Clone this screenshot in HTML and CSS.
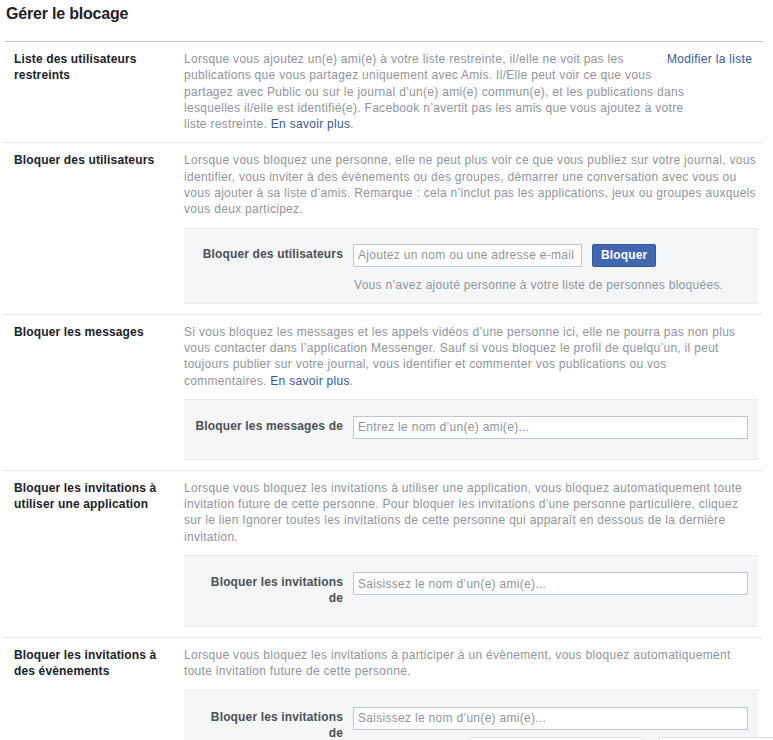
FILE: index.html
```html
<!DOCTYPE html>
<html lang="fr">
<head>
<meta charset="utf-8">
<title>Gérer le blocage</title>
<link rel="stylesheet" href="styles.css">
</head>
<body>
<div class="page">
  <h2 class="page-title">Gérer le blocage</h2>

  <div class="row row--edit">
    <div class="row-label">Liste des utilisateurs restreints</div>
    <div class="row-body">
      <p class="desc">Lorsque vous ajoutez un(e) ami(e) à votre liste restreinte, il/elle ne voit pas les publications que vous partagez uniquement avec Amis. Il/Elle peut voir ce que vous partagez avec Public ou sur le journal d’un(e) ami(e) commun(e), et les publications dans lesquelles il/elle est identifié(e). Facebook n’avertit pas les amis que vous ajoutez à votre liste restreinte. <a class="link" href="#">En savoir plus</a>.</p>
    </div>
    <div class="row-edit"><a class="link" href="#">Modifier la liste</a></div>
  </div>

  <div class="row">
    <div class="row-label">Bloquer des utilisateurs</div>
    <div class="row-body">
      <p class="desc">Lorsque vous bloquez une personne, elle ne peut plus voir ce que vous publiez sur votre journal, vous identifier, vous inviter à des évènements ou des groupes, démarrer une conversation avec vous ou vous ajouter à sa liste d’amis. Remarque : cela n’inclut pas les applications, jeux ou groupes auxquels vous deux participez.</p>
      <div class="block-form block-form--hint">
        <div class="form-row">
          <label class="form-label">Bloquer des utilisateurs</label>
          <div class="form-field">
            <div class="field-inline">
              <input class="text-input text-input--short" type="text" placeholder="Ajoutez un nom ou une adresse e-mail">
              <button class="btn-primary" type="button">Bloquer</button>
            </div>
            <p class="hint">Vous n’avez ajouté personne à votre liste de personnes bloquées.</p>
          </div>
        </div>
      </div>
    </div>
  </div>

  <div class="row">
    <div class="row-label">Bloquer les messages</div>
    <div class="row-body">
      <p class="desc">Si vous bloquez les messages et les appels vidéos d’une personne ici, elle ne pourra pas non plus vous contacter dans l’application Messenger. Sauf si vous bloquez le profil de quelqu’un, il peut toujours publier sur votre journal, vous identifier et commenter vos publications ou vos<br>commentaires. <a class="link" href="#">En savoir plus</a>.</p>
      <div class="block-form">
        <div class="form-row">
          <label class="form-label">Bloquer les messages de</label>
          <div class="form-field">
            <input class="text-input" type="text" placeholder="Entrez le nom d’un(e) ami(e)...">
          </div>
        </div>
      </div>
    </div>
  </div>

  <div class="row">
    <div class="row-label">Bloquer les invitations à utiliser une application</div>
    <div class="row-body">
      <p class="desc">Lorsque vous bloquez les invitations à utiliser une application, vous bloquez automatiquement toute invitation future de cette personne. Pour bloquer les invitations d’une personne particulière, cliquez sur le lien Ignorer toutes les invitations de cette personne qui apparaît en dessous de la dernière invitation.</p>
      <div class="block-form">
        <div class="form-row">
          <label class="form-label">Bloquer les invitations de</label>
          <div class="form-field">
            <input class="text-input" type="text" placeholder="Saisissez le nom d’un(e) ami(e)...">
          </div>
        </div>
      </div>
    </div>
  </div>

  <div class="row">
    <div class="row-label">Bloquer les invitations à des évènements</div>
    <div class="row-body">
      <p class="desc">Lorsque vous bloquez les invitations à participer à un évènement, vous bloquez automatiquement toute invitation future de cette personne.</p>
      <div class="block-form">
        <div class="form-row">
          <label class="form-label">Bloquer les invitations de</label>
          <div class="form-field">
            <input class="text-input" type="text" placeholder="Saisissez le nom d’un(e) ami(e)...">
          </div>
        </div>
      </div>
    </div>
  </div>
</div>

<div class="chat-tab chat-tab--one"></div>
<div class="chat-tab chat-tab--two"></div>
</body>
</html>
```

FILE: styles.css
```css
html, body {
  margin: 0;
  padding: 0;
  background: #ffffff;
}

body {
  font-family: "Liberation Sans", Arial, Helvetica, sans-serif;
  font-size: 12px;
  line-height: 16px;
  letter-spacing: 0.3px;
  color: #1d2129;
}

.page {
  margin-left: 4px;
  width: 759px;
}

.page-title {
  margin: 0;
  padding: 4px 0 17px 2px;
  font-size: 16px;
  line-height: 20px;
  font-weight: bold;
  letter-spacing: -0.2px;
  color: #1d2129;
  border-bottom: 1px solid #c6c7ca;
}

.row {
  display: grid;
  grid-template-columns: 170px 1fr;
  padding: 9px 5px 10px 10px;
  border-bottom: 1px solid #e9ebee;
}

.row--edit {
  grid-template-columns: 170px 510px 1fr;
}

.row-label {
  font-weight: bold;
  letter-spacing: 0.15px;
  color: #1d2129;
  padding-right: 16px;
}

.row-body {
  min-width: 0;
}

.row-edit {
  white-space: nowrap;
}

.row-edit .link {
  display: inline-block;
  margin-left: -27px;
}

.desc {
  margin: 0;
  line-height: 16.3px;
  color: #90949c;
}

.link {
  color: #365899;
  text-decoration: none;
}

.block-form {
  margin-top: 10px;
  background: #f5f6f7;
  border-top: 1px solid #e9ebee;
  border-bottom: 1px solid #e9ebee;
  padding: 16px 10px 20px 0;
}

.block-form--hint {
  padding-top: 15px;
  padding-bottom: 10px;
}

.form-row {
  display: grid;
  grid-template-columns: 148.7px 1fr;
  column-gap: 10px;
  padding-left: 10.3px;
  align-items: start;
}

.form-label {
  text-align: right;
  font-weight: bold;
  letter-spacing: 0.15px;
  color: #4b4f56;
  padding-top: 2px;
}

.form-field {
  min-width: 0;
}

.field-inline {
  display: flex;
  align-items: center;
  gap: 10px;
}

.text-input {
  box-sizing: border-box;
  display: block;
  width: 100%;
  height: 23px;
  margin: 0;
  padding: 0 4px;
  border: 1px solid #bdc7d8;
  border-radius: 0;
  background: #ffffff;
  font-family: inherit;
  font-size: 12px;
  letter-spacing: 0.3px;
  color: #1d2129;
  outline: none;
}

.text-input--short {
  width: 229px;
}

.text-input::placeholder {
  color: #90949c;
}

.btn-primary {
  box-sizing: border-box;
  height: 23px;
  margin: 0;
  padding: 0 8px;
  background: #4267b2;
  border: 1px solid #365899;
  border-radius: 2px;
  color: #ffffff;
  font-family: inherit;
  font-size: 12px;
  font-weight: bold;
  letter-spacing: 0.15px;
  line-height: 21px;
  cursor: pointer;
}

.hint {
  margin: 10px 0 0 1px;
  color: #90949c;
}

.chat-tab {
  position: fixed;
  top: 737px;
  height: 10px;
  background: #ffffff;
  border: 1px solid #dddfe2;
  border-bottom: 0;
  border-radius: 6px 6px 0 0;
}

.chat-tab--one {
  left: 467px;
  width: 176px;
}

.chat-tab--two {
  left: 657px;
  width: 130px;
}
```
